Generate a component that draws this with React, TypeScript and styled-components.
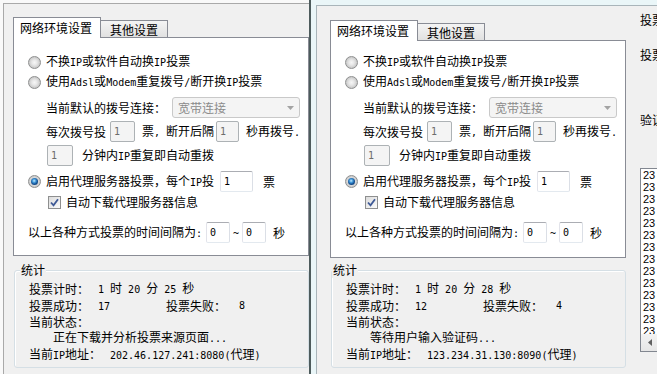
import React from 'react';
import styled, { createGlobalStyle, css } from 'styled-components';

const GlobalStyle = createGlobalStyle`
  html, body { margin: 0; padding: 0; }
  body {
    background: #f0f0f0;
    font-family: "Noto Sans CJK SC", "Noto Sans", sans-serif;
    font-size: 12px;
    color: #000;
  }
`;

const Screen = styled.div`
  display: flex;
  width: 657px;
  height: 374px;
  overflow: hidden;
`;

const Pane = styled.div<{ $w?: number; $bg: string; $pt: number; $pl: number }>`
  flex: ${p => (p.$w ? `0 0 ${p.$w}px` : '1 1 0')};
  min-width: 0;
  display: flex;
  box-sizing: border-box;
  padding: ${p => p.$pt}px 0 0 ${p => p.$pl}px;
  background: ${p => p.$bg};
`;

const Divider = styled.div`
  flex: 0 0 2px;
  background: #4d5b5c;
`;

const Frame = styled.div<{ $edge: string; $pl: number }>`
  flex: 1 1 0;
  min-width: 0;
  display: flex;
  align-items: flex-start;
  background: #f0f0f0;
  border-top: 1px solid ${p => p.$edge};
  border-left: 1px solid ${p => p.$edge};
  padding-left: ${p => p.$pl}px;
  overflow: hidden;
`;

const MainCol = styled.div<{ $pt: number }>`
  flex: 0 0 296px;
  display: flex;
  flex-direction: column;
  padding-top: ${p => p.$pt}px;
`;

const TabStrip = styled.div`
  display: flex;
  align-items: flex-start;
  height: 20px;
`;

const Tab = styled.div<{ $active?: boolean }>`
  box-sizing: border-box;
  display: flex;
  align-items: center;
  white-space: nowrap;
  line-height: 14px;
  border: 1px solid #898c95;
  border-bottom: none;
  ${p =>
    p.$active
      ? css`
          position: relative;
          z-index: 1;
          height: 21px;
          padding: 0 8px 1px 6px;
          background: #fff;
        `
      : css`
          height: 17px;
          margin-top: 3px;
          border-left: none;
          padding: 2px 9px 0 9px;
          background: linear-gradient(#f4f4f4, #e1e1e1);
        `}
`;

const Panel = styled.div<{ $h: number; $pt: number }>`
  box-sizing: border-box;
  height: ${p => p.$h}px;
  padding-top: ${p => p.$pt}px;
  background: #fff;
  border: 1px solid #898c95;
  display: flex;
  flex-direction: column;
`;

const Row = styled.div<{ $h: number; $mt?: number; $indent: number }>`
  display: flex;
  align-items: center;
  height: ${p => p.$h}px;
  margin-top: ${p => p.$mt ?? 0}px;
  padding-left: ${p => p.$indent}px;
  white-space: nowrap;
  line-height: 14px;
`;

const Txt = styled.span<{ $ml?: number }>`
  margin-left: ${p => p.$ml ?? 0}px;
`;

const M = styled.span`
  font-family: "DejaVu Sans Mono", "Liberation Mono", monospace;
  font-size: 10px;
`;

const Radio = styled.span<{ $checked?: boolean }>`
  box-sizing: border-box;
  flex: none;
  width: 13px;
  height: 13px;
  border-radius: 50%;
  border: 1px solid #8e8f8f;
  background: radial-gradient(circle at 50% 50%, #f6f6f6 0, #e8e8e8 2.5px, #c9c9c9 5.5px);
  display: flex;
  align-items: center;
  justify-content: center;
  &::after {
    content: '';
    display: ${p => (p.$checked ? 'block' : 'none')};
    width: 7px;
    height: 7px;
    border-radius: 50%;
    background: radial-gradient(circle at 45% 40%, #c4ecff 0, #3d95d8 1.8px, #124a8a 3.5px);
  }
`;

const CheckBox = styled.span`
  box-sizing: border-box;
  flex: none;
  width: 13px;
  height: 13px;
  margin-left: 20px;
  border: 1px solid #8e8f8f;
  background: linear-gradient(135deg, #dcdcdc, #fbfbfb);
  display: flex;
  align-items: center;
  justify-content: center;
`;

const Field = styled.span<{ $w: number; $ml?: number; $disabled?: boolean }>`
  box-sizing: border-box;
  flex: none;
  display: flex;
  align-items: center;
  width: ${p => p.$w}px;
  height: 21px;
  margin-left: ${p => p.$ml ?? 0}px;
  padding-left: 3px;
  border: 1px solid;
  border-radius: 2px;
  font-family: "DejaVu Sans Mono", "Liberation Mono", monospace;
  font-size: 10px;
  ${p =>
    p.$disabled
      ? css`
          border-color: #adb2b5;
          background: #f4f4f4;
          color: #6d6d6d;
        `
      : css`
          border-color: #abadb3 #dbdfe6 #e3e9ef #e2e3ea;
          background: #fff;
          color: #000;
        `}
`;

const Combo = styled.span`
  box-sizing: border-box;
  flex: none;
  width: 128px;
  height: 21px;
  margin-left: 6px;
  padding: 0 5px 0 5px;
  display: flex;
  align-items: center;
  justify-content: space-between;
  border: 1px solid #c9c9c9;
  border-radius: 3px;
  background: #f4f4f4;
  color: #8b8b8b;
`;

const Stats = styled.fieldset<{ $mt: number }>`
  box-sizing: border-box;
  width: 295px;
  min-width: 0;
  margin: ${p => p.$mt}px 0 0 1px;
  padding: 2px 0 3px 0;
  border: 1px solid #d5dfe5;
  border-radius: 3px;
  box-shadow: inset 1px 1px 0 #fff;
`;

const Legend = styled.legend<{ $ml: number }>`
  margin-left: ${p => p.$ml}px;
  padding: 0 1px;
  line-height: 16px;
  background: #f0f0f0;
`;

const StatRow = styled.div<{ $h: number; $indent?: number }>`
  display: flex;
  align-items: center;
  height: ${p => p.$h}px;
  padding-left: ${p => 14 + (p.$indent ?? 0)}px;
  white-space: nowrap;
  line-height: 14px;
`;

const StatLabel = styled.span<{ $w: number }>`
  flex: 0 0 ${p => p.$w}px;
`;

const SideCol = styled.div`
  flex: 1 1 0;
  min-width: 0;
  margin-left: 14px;
  display: flex;
  flex-direction: column;
  overflow: hidden;
`;

const SideLabel = styled.div<{ $mt: number }>`
  margin-top: ${p => p.$mt}px;
  line-height: 16px;
  white-space: nowrap;
`;

const ListBox = styled.div`
  box-sizing: border-box;
  flex: none;
  width: 160px;
  height: 184px;
  margin-top: 40px;
  border: 1px solid #828790;
  background: #fff;
  display: flex;
  flex-direction: column;
`;

const ListItems = styled.div`
  flex: 1 1 0;
  overflow: hidden;
  padding-left: 2px;
  font-family: "Liberation Sans", Arial, sans-serif;
  font-size: 11px;
  line-height: 12px;
`;

const HScroll = styled.div`
  flex: 0 0 17px;
  display: flex;
  background: #ececec;
`;

const ScrollBtn = styled.div`
  flex: 0 0 17px;
  display: flex;
  align-items: center;
  justify-content: center;
  background: linear-gradient(#f3f3f3, #e6e6e6);
`;

type Stat = {
  time: [string, string, string];
  ok: string;
  fail: string;
  status: React.ReactNode;
  ip: string;
};

type Cfg = {
  pt: number;
  pl: number;
  bg: string;
  edge: string;
  framePl: number;
  colPt: number;
  panelH: number;
  panelPt: number;
  statsMt: number;
  legendMl: number;
  stat: Stat;
};

const Arrow = () => (
  <svg width="7" height="4" viewBox="0 0 7 4">
    <path d="M0 0 H7 L3.5 4 Z" fill="#a3a3a3" />
  </svg>
);

const Check = () => (
  <svg width="9" height="9" viewBox="0 0 9 9">
    <path d="M1 4.5 L3.5 7.3 L8 1.2" fill="none" stroke="#3f5a96" strokeWidth="1.8" />
  </svg>
);

const Settings: React.FC<{ cfg: Cfg }> = ({ cfg }) => (
  <MainCol $pt={cfg.colPt}>
    <TabStrip>
      <Tab $active>网络环境设置</Tab>
      <Tab>其他设置</Tab>
    </TabStrip>
    <Panel $h={cfg.panelH} $pt={cfg.panelPt}>
      <Row $h={20} $indent={14}>
        <Radio />
        <Txt $ml={5}>
          不换<M>IP</M>或软件自动换<M>IP</M>投票
        </Txt>
      </Row>
      <Row $h={20} $indent={14}>
        <Radio />
        <Txt $ml={5}>
          使用<M>Adsl</M>或<M>Modem</M>重复拨号<M>/</M>断开换<M>IP</M>投票
        </Txt>
      </Row>
      <Row $h={21} $mt={5} $indent={32}>
        <Txt>当前默认的拨号连接：</Txt>
        <Combo>
          <span>宽带连接</span>
          <Arrow />
        </Combo>
      </Row>
      <Row $h={21} $mt={3} $indent={32}>
        <Txt>每次拨号投</Txt>
        <Field $w={25} $ml={4} $disabled>
          1
        </Field>
        <Txt $ml={7}>
          票<M>, </M>断开后隔
        </Txt>
        <Field $w={23} $ml={2} $disabled>
          1
        </Field>
        <Txt $ml={7}>
          秒再拨号<M>.</M>
        </Txt>
      </Row>
      <Row $h={21} $mt={3} $indent={33}>
        <Field $w={26} $disabled>
          1
        </Field>
        <Txt $ml={9}>
          分钟内<M>IP</M>重复即自动重拨
        </Txt>
      </Row>
      <Row $h={21} $mt={5} $indent={14}>
        <Radio $checked />
        <Txt $ml={5}>
          启用代理服务器投票，每个<M>IP</M>投
        </Txt>
        <Field $w={33} $ml={6}>
          1
        </Field>
        <Txt $ml={10}>票</Txt>
      </Row>
      <Row $h={20} $indent={14}>
        <CheckBox>
          <Check />
        </CheckBox>
        <Txt $ml={5}>自动下载代理服务器信息</Txt>
      </Row>
      <Row $h={21} $mt={10} $indent={14}>
        <Txt>
          以上各种方式投票的时间间隔为<M>:</M>
        </Txt>
        <Field $w={24} $ml={4}>
          0
        </Field>
        <Txt $ml={3}>
          <M>~</M>
        </Txt>
        <Field $w={24} $ml={3}>
          0
        </Field>
        <Txt $ml={7}>秒</Txt>
      </Row>
    </Panel>
    <Stats $mt={cfg.statsMt}>
      <Legend $ml={cfg.legendMl}>统计</Legend>
      <StatRow $h={17}>
        <StatLabel $w={69}>投票计时：</StatLabel>
        <span>
          <M>{cfg.stat.time[0]} </M>时<M> {cfg.stat.time[1]} </M>分<M> {cfg.stat.time[2]} </M>秒
        </span>
      </StatRow>
      <StatRow $h={17}>
        <StatLabel $w={69}>投票成功：</StatLabel>
        <StatLabel $w={68}>
          <M>{cfg.stat.ok}</M>
        </StatLabel>
        <StatLabel $w={73}>投票失败：</StatLabel>
        <M>{cfg.stat.fail}</M>
      </StatRow>
      <StatRow $h={16}>当前状态：</StatRow>
      <StatRow $h={16} $indent={24}>
        {cfg.stat.status}
      </StatRow>
      <StatRow $h={18}>
        <StatLabel $w={81}>
          当前<M>IP</M>地址：
        </StatLabel>
        <span>
          <M>{cfg.stat.ip}(</M>代理<M>)</M>
        </span>
      </StatRow>
    </Stats>
  </MainCol>
);

const leftCfg: Cfg = {
  pt: 3,
  pl: 3,
  bg: '#f9f9f9',
  edge: '#a9a9a9',
  framePl: 9,
  colPt: 13,
  panelH: 219,
  panelPt: 14,
  statsMt: 6,
  legendMl: 5,
  stat: {
    time: ['1', '20', '25'],
    ok: '17',
    fail: '8',
    status: (
      <span>
        正在下载并分析投票来源页面<M>...</M>
      </span>
    ),
    ip: '202.46.127.241:8080',
  },
};

const rightCfg: Cfg = {
  pt: 5,
  pl: 5,
  bg: '#eaf6f8',
  edge: '#a9b5ba',
  framePl: 13,
  colPt: 14,
  panelH: 218,
  panelPt: 11,
  statsMt: 4,
  legendMl: 0,
  stat: {
    time: ['1', '20', '28'],
    ok: '12',
    fail: '4',
    status: (
      <span>
        等待用户输入验证码<M>...</M>
      </span>
    ),
    ip: '123.234.31.130:8090',
  },
};

const listRows = Array.from({ length: 15 }, (_, i) => i);

export default function App() {
  return (
    <>
      <GlobalStyle />
      <Screen>
        <Pane $w={309} $bg={leftCfg.bg} $pt={leftCfg.pt} $pl={leftCfg.pl}>
          <Frame $edge={leftCfg.edge} $pl={leftCfg.framePl}>
            <Settings cfg={leftCfg} />
          </Frame>
        </Pane>
        <Divider />
        <Pane $bg={rightCfg.bg} $pt={rightCfg.pt} $pl={rightCfg.pl}>
          <Frame $edge={rightCfg.edge} $pl={rightCfg.framePl}>
            <Settings cfg={rightCfg} />
            <SideCol>
              <SideLabel $mt={6}>投票</SideLabel>
              <SideLabel $mt={19}>投票</SideLabel>
              <SideLabel $mt={49}>验证</SideLabel>
              <ListBox>
                <ListItems>
                  {listRows.map(i => (
                    <div key={i}>23</div>
                  ))}
                </ListItems>
                <HScroll>
                  <ScrollBtn>
                    <svg width="4" height="7" viewBox="0 0 4 7">
                      <path d="M4 0 V7 L0 3.5 Z" fill="#606060" />
                    </svg>
                  </ScrollBtn>
                </HScroll>
              </ListBox>
            </SideCol>
          </Frame>
        </Pane>
      </Screen>
    </>
  );
}
